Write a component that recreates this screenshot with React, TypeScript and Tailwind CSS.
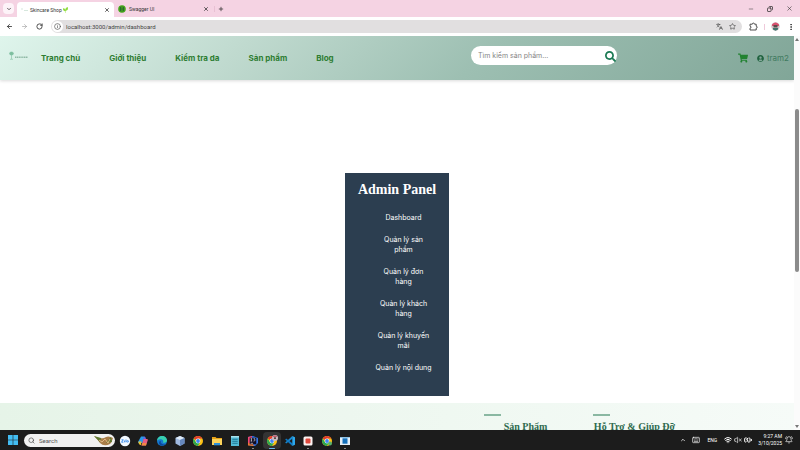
import type { ReactNode } from "react";
import { FaSearch, FaShoppingCart, FaUserCircle } from "react-icons/fa";
import {
  ArrowLeft,
  ArrowRight,
  BatteryCharging,
  BellRing,
  ChevronDown,
  ChevronUp,
  Copy,
  EllipsisVertical,
  Info,
  Keyboard,
  Languages,
  Minus,
  Plus,
  RotateCw,
  Search,
  Star,
  VolumeX,
  Wifi,
  X,
} from "lucide-react";

const navLinks = ["Trang chủ", "Giới thiệu", "Kiểm tra da", "Sản phẩm", "Blog"];

const adminLinks = [
  "Dashboard",
  "Quản lý sản phẩm",
  "Quản lý đơn hàng",
  "Quản lý khách hàng",
  "Quản lý khuyến mãi",
  "Quản lý nội dung",
];

const footerColumns = ["Sản Phẩm", "Hỗ Trợ & Giúp Đỡ"];

function TabStrip() {
  return (
    <div className="flex h-[17px] shrink-0 items-center bg-[#f5d3e3] pl-[3px] text-[#333]">
      <button aria-label="Search tabs" className="flex h-[11px] w-[11px] items-center justify-center rounded bg-[#fdf3f8]">
        <ChevronDown size={6} strokeWidth={3} />
      </button>
      <div className="ml-[3px] flex h-[15px] w-[97px] items-center self-end rounded-t bg-white pr-1 pl-[3px]">
        <svg width="8" height="6" viewBox="0 0 8 6" aria-hidden="true">
          <path d="M1 2h2M4 3.500h4" stroke="#c4dccf" strokeWidth=".7" />
        </svg>
        <span className="ml-[2px] text-[5px] leading-[8px] whitespace-nowrap">Skincare Shop</span>
        <svg className="ml-px" width="5" height="6" viewBox="0 0 5 6" aria-hidden="true">
          <path d="M2.500 6V3M2.500 4C0 4 0 2 0 1.500c2 0 2.500 1 2.500 2.500ZM2.500 3.500C2.500 1 3.500.5 5 .5c0 2-.5 3-2.500 3Z" fill="#8fdc3c" stroke="#8fdc3c" strokeWidth=".4" />
        </svg>
        <button aria-label="Close Skincare Shop" className="ml-auto"><X size={6} strokeWidth={3} /></button>
      </div>
      <div className="flex w-[97px] items-center pr-[2px] pl-1">
        <svg width="8" height="8" viewBox="0 0 8 8" aria-hidden="true">
          <circle cx="4" cy="4" r="3.800" fill="#45a51b" />
          <path d="M3.200 2C2.200 2 2.800 3.700 2 4c.8.300.2 2 1.200 2M4.800 2c1 0 .4 1.700 1.200 2-.8.300-.2 2-1.200 2M3.300 4h1.500" fill="none" stroke="#173647" strokeWidth=".7" />
        </svg>
        <span className="ml-[3px] text-[5px] leading-[8px]">Swagger UI</span>
        <button aria-label="Close Swagger UI" className="ml-auto"><X size={6} strokeWidth={3} /></button>
      </div>
      <button aria-label="New tab" className="ml-[3px] border-l border-[#e8c0d3] pl-[3px]"><Plus size={6} strokeWidth={3} /></button>
      <div className="ml-auto flex items-center gap-[13px] pr-[7px]">
        <button aria-label="Minimize"><Minus size={6} strokeWidth={2} /></button>
        <button aria-label="Restore"><Copy className="-scale-x-100" size={6} strokeWidth={3} /></button>
        <button aria-label="Close window"><X size={7} strokeWidth={2} /></button>
      </div>
    </div>
  );
}

function Toolbar() {
  return (
    <div className="flex h-[19px] shrink-0 items-center bg-white pr-[5px] pl-[6px] text-[#3c3c3c]">
      <div className="flex items-center gap-2">
        <button aria-label="Back"><ArrowLeft size={7} strokeWidth={3} /></button>
        <button aria-label="Forward" className="text-[#999]"><ArrowRight size={7} strokeWidth={2} /></button>
        <button aria-label="Reload"><RotateCw size={7} strokeWidth={3} /></button>
      </div>
      <div className="ml-2 flex h-[13px] flex-1 items-center rounded-full bg-[#e1dfe0] pr-[6px] pl-px">
        <span className="flex h-[11px] w-[11px] items-center justify-center rounded-full bg-white"><Info size={7} strokeWidth={2} /></span>
        <input aria-label="Address" className="ml-[3px] h-[11px] min-w-0 flex-1 bg-transparent text-[6px] text-[#444] outline-none" defaultValue="localhost:3000/admin/dashboard" />
        <button aria-label="Translate"><Languages size={7} strokeWidth={2} /></button>
        <button aria-label="Bookmark" className="ml-[6px]"><Star size={7} strokeWidth={2} /></button>
      </div>
      <button aria-label="Extensions" className="ml-[7px]">
        <svg width="9" height="9" viewBox="0 0 9 9" fill="none" aria-hidden="true">
          <path d="M1 2.200h2.300a1.100 1.100 0 0 1 2.200 0h1.700v2a1 1 0 0 1 0 2V8H1V6.200a1 1 0 0 0 0-2Z" stroke="#3c3c3c" strokeWidth=".9" strokeLinejoin="round" />
        </svg>
      </button>
      <span className="ml-[6px] h-[6px] w-px bg-[#efc9da]" />
      <button aria-label="Profile" className="ml-[6px]">
        <svg width="9" height="9" viewBox="0 0 9 9" aria-hidden="true">
          <circle cx="4.500" cy="4.500" r="4.200" fill="#d0c6cb" />
          <path d="M1 2.500Q4.500-1.500 8 2.500V4H1Z" fill="#d8506f" />
          <path d="M2.500 3h4v2.500h-4Z" fill="#5e4b4b" />
          <path d="M2 6h5v1.500L4.500 8.700 2 7.500Z" fill="#3f756c" />
        </svg>
      </button>
      <button aria-label="Menu" className="ml-[7px]"><EllipsisVertical size={8} strokeWidth={3} /></button>
    </div>
  );
}

function SiteHeader() {
  return (
    <header className="flex h-[44px] shrink-0 items-center bg-linear-[135deg,#dff5ec,#c0dacf_30%,#9dbfb2_60%,#81a698] pr-[5px] pl-[9px] shadow-[0_1px_3px_#00000026]">
      <a href="#home" aria-label="Skincare" className="mb-1">
        <svg width="20" height="10" viewBox="0 0 20 10" aria-hidden="true">
          <path d="M2.500 8V4M.5 2.500C.5.500 4.500.5 4.500 2.500S.5 4.500.5 2.500ZM1 8.300h3" fill="#7dbf9f" stroke="#7dbf9f" strokeWidth=".6" />
          <path d="M6 6.300h13" stroke="#8fb9a5" strokeWidth="1.500" strokeDasharray="1.300 .5" />
        </svg>
      </a>
      <nav className="ml-3 flex gap-[29px] text-[8px] leading-[12px] font-bold whitespace-nowrap text-[#2e7d32]">
        {navLinks.map((label) => (
          <a key={label} href="#page">{label}</a>
        ))}
      </nav>
      <form className="mr-[121px] mb-[6px] ml-auto flex h-[19px] w-[146px] items-center rounded-full bg-white pr-px pl-[7px]">
        <input aria-label="Tìm kiếm sản phẩm" className="h-[15px] min-w-0 flex-1 text-[7px] outline-none placeholder:text-[#858585]" placeholder="Tìm kiếm sản phẩm..." />
        <button type="button" aria-label="Tìm kiếm" className="mt-[2px] text-[#1b7a54]"><FaSearch size={11} /></button>
      </form>
      <a href="#cart" aria-label="Giỏ hàng" className="text-[#238232]"><FaShoppingCart size={10} /></a>
      <a href="#account" className="ml-[9px] flex items-center gap-[3px] text-[8px] leading-[12px] text-[#3f7a60]">
        <FaUserCircle className="text-[#20633f]" size={7} />
        tram2
      </a>
    </header>
  );
}

function AdminPanel() {
  return (
    <aside className="mx-auto mt-[93px] h-[223px] w-[104px] shrink-0 bg-[#2c3e50] pt-[7px] text-center text-white">
      <h2 className="font-['Liberation_Serif',serif] text-[14px] leading-[20px] font-bold whitespace-nowrap">Admin Panel</h2>
      <ul className="mt-[13px] ml-[30px] flex w-[57px] flex-col gap-3 text-[7px] leading-[10px]">
        {adminLinks.map((label) => (
          <li key={label}><a href="#admin" className="block">{label}</a></li>
        ))}
      </ul>
    </aside>
  );
}

function SiteFooter() {
  return (
    <footer className="mt-[7px] flex flex-1 justify-end gap-[26px] bg-linear-to-r from-[#e6f4e8] to-[#f6fbf8] pt-[11px] pr-[118px]">
      {footerColumns.map((title) => (
        <section key={title} className="w-[83px]">
          <div className="h-[2px] w-[17px] bg-[#8ab8a2]" />
          <h3 className="mt-1 text-center font-['Liberation_Serif',serif] text-[10px] leading-[14px] font-bold whitespace-nowrap text-[#2f6b4f]">{title}</h3>
        </section>
      ))}
    </footer>
  );
}

function Scrollbar() {
  return (
    <div className="flex w-[6px] shrink-0 flex-col items-center bg-[#fbfbfb]">
      <span className="mt-[2px] h-0 w-0 border-x-2 border-b-[3px] border-x-transparent border-b-[#777]" />
      <span className="mt-[68px] h-[163px] w-[4px] rounded-full bg-[#8b8b8b]" />
      <span className="mt-auto mb-[2px] h-0 w-0 border-x-2 border-t-[3px] border-x-transparent border-t-[#777]" />
    </div>
  );
}

function Icon({ children }: { children: ReactNode }) {
  return <svg width="12" height="12" viewBox="0 0 12 12" aria-hidden="true">{children}</svg>;
}

function ChromeMark() {
  return (
    <>
      <circle cx="6" cy="6" r="5" fill="#fbc116" />
      <path d="M6 6 1.670 3.500A5 5 0 0 1 10.330 3.500L6 3.600Z" fill="#e33b2e" />
      <path d="M1.670 3.500A5 5 0 0 0 6 11L8 7.200 4 7.200Z" fill="#2da94f" />
      <circle cx="6" cy="6" r="2.400" fill="#fff" />
      <circle cx="6" cy="6" r="1.900" fill="#4285f4" />
    </>
  );
}

const taskbarApps: { name: string; running?: boolean; active?: boolean; icon: ReactNode }[] = [
  {
    name: "Zalo",
    icon: (
      <>
        <circle cx="6" cy="6" r="5.200" fill="#f3f9ff" />
        <path d="M2.500 4.800h1.800L2.500 7.200h1.900M5.600 5.500v1.800M7 4.500v2.800" fill="none" stroke="#1677e8" strokeWidth=".8" />
        <circle cx="8.700" cy="6.400" r=".8" fill="none" stroke="#1677e8" strokeWidth=".7" />
      </>
    ),
  },
  {
    name: "Copilot",
    icon: (
      <>
        <path d="M4 1.500h3.500L5.500 8H1.500Q1 8 1.300 6.500Z" fill="#2a9be8" />
        <path d="M1.500 6.500h3L4 10.300Q2 10 1.500 8Z" fill="#e9c12e" />
        <path d="M7 1.500q1.500 0 2 2L8 5H6Z" fill="#6265e8" />
        <path d="M6.500 4h3.700q1 0 .5 1.500L9 10.500H4.500Z" fill="#e65e84" />
        <path d="M4.500 10.500 5.500 8h4L9 10.500Z" fill="#f28c45" />
      </>
    ),
  },
  {
    name: "Edge",
    icon: (
      <>
        <circle cx="6" cy="6" r="5" fill="#1478cf" />
        <path d="M1 6C1 3 3.500 1 6 1c3 0 5 2 5 4.500C11 7.500 8.500 8 7 7.400 8.300 5.500 6 4 4 4.200 2.500 4.300 1.500 5 1 6Z" fill="#38cfae" />
        <path d="M5 5.800C4 7.500 5.500 10 9.500 9.300 7 12 2.500 10.500 3 7.500 3.200 6.500 4 5.800 5 5.800Z" fill="#0c4b9b" />
      </>
    ),
  },
  {
    name: "VirtualBox",
    icon: (
      <>
        <path d="m6 1 4.500 2v5.500L6 11 1.500 8.500V3Z" fill="#9fb9df" />
        <path d="m6 1 4.500 2L6 5 1.500 3Z" fill="#dfebf8" />
        <path d="M6 5v6l4.500-2.500V3Z" fill="#6688bd" />
      </>
    ),
  },
  { name: "Chrome", icon: <ChromeMark /> },
  {
    name: "Files",
    icon: (
      <>
        <path d="M1 2h3.500l1 1H11v7H1Z" fill="#e8a317" />
        <path d="M1 4h10v6H1Z" fill="#fcd35c" />
        <path d="M3 8h6v2.300H3Z" fill="#2c8fd8" />
      </>
    ),
  },
  {
    name: "Notepad",
    icon: (
      <>
        <path d="M2 1h8v10H2Z" fill="#52bad5" />
        <path d="M2 1h8v1.500H2Z" fill="#a8e3ee" />
        <path d="M3.300 4.300h5.400M3.300 6.300h5.400M3.300 8.300h5.400" stroke="#146887" strokeWidth=".8" />
      </>
    ),
  },
  {
    name: "IntelliJ IDEA",
    running: true,
    icon: (
      <>
        <path d="m1 2 5-1 5 2v5l-3 3-7-1Z" fill="#3476e8" />
        <path d="M1 2 5 1 5 6 1 9Z" fill="#f04876" />
        <path d="m1 8 4-1 2 4-6-.5Z" fill="#ef7934" />
        <path d="M2.700 2.700h6.600v6.600H2.700Z" fill="#100b22" />
        <path d="M3.600 3.700h1.600M4.400 3.700v2.400M3.600 6.100h1.600M6.500 3.700h1.300v1.800q0 .6-1.300.6M3.600 8.300h2.500" fill="none" stroke="#fff" strokeWidth=".6" />
      </>
    ),
  },
  {
    name: "Chrome profile",
    active: true,
    icon: (
      <>
        <ChromeMark />
        <circle cx="9" cy="3" r="3" fill="#c9bcc1" />
        <path d="M6.500 2Q9-1.500 11.500 2Z" fill="#c35c71" />
        <path d="M8 2.300h2v1.700H8Z" fill="#594848" />
      </>
    ),
  },
  {
    name: "Visual Studio Code",
    icon: (
      <>
        <path d="M8.300 1 1.200 7.500l1 .9L8.300 3.700Z" fill="#1689d2" />
        <path d="m8.300 11-7.100-6.500 1-.9 6.100 4.700Z" fill="#0e78c4" />
        <path d="m8.300 1 2.700 1.200v7.600L8.300 11Z" fill="#2ba8ee" />
      </>
    ),
  },
  {
    name: "Recorder",
    running: true,
    icon: (
      <>
        <rect x="1.500" y="1.500" width="9" height="9" rx="1.500" fill="#fbf2f0" />
        <rect x="3.500" y="3.500" width="5" height="5" rx="1" fill="#e0493d" />
      </>
    ),
  },
  { name: "Chrome app", icon: <><ChromeMark /><circle cx="9" cy="8.500" r="2" fill="#58b26a" /></> },
  {
    name: "Window",
    running: true,
    icon: (
      <>
        <path d="M1 2h10v8H1Z" fill="#e7f0f7" />
        <path d="M3.500 3.300h5v5.400h-5Z" fill="#1672bd" />
        <path d="M1 2h10v1H1Z" fill="#8fc2e4" />
      </>
    ),
  },
];

function Taskbar() {
  return (
    <div className="flex h-5 shrink-0 items-center bg-[#1c1c1c] pr-[7px] pl-2 text-white">
      <button aria-label="Start">
        <svg width="10" height="10" viewBox="0 0 10 10" aria-hidden="true">
          <path d="M0 0h4.700v4.700H0ZM5.300 0H10v4.700H5.300ZM0 5.300h4.700V10H0ZM5.300 5.300H10V10H5.300Z" fill="#43bdf3" />
        </svg>
      </button>
      <div className="ml-[6px] flex h-[13px] w-[91px] items-center rounded-full bg-[#f1f1f1] pl-1 text-[#333]">
        <Search size={7} strokeWidth={2} />
        <input aria-label="Search" className="ml-1 h-[11px] w-8 text-[6px] outline-none placeholder:text-[#555]" placeholder="Search" />
        <svg className="mr-px ml-auto" width="21" height="11" viewBox="0 0 21 11" aria-hidden="true">
          <path d="M1 1q5 3 10 2 4-3 9 0-1 4-3 6-6 3-10-1Q5 5 1 1Z" fill="#a97d48" />
          <path d="m1 1 7 2-1 4ZM13 8l5-6 1 5Z" fill="#5e7931" />
          <path d="m6 5 3 2 3-3 3 4 2-4" fill="none" stroke="#e2b784" />
        </svg>
      </div>
      <div className="ml-px flex w-[238px] justify-between">
        {taskbarApps.map((app) => (
          <button
            key={app.name}
            aria-label={app.name}
            className={`flex h-[17px] w-[18px] flex-col items-center justify-end rounded-sm ${app.active ? "bg-[#343434]" : ""}`}
          >
            <Icon>{app.icon}</Icon>
            <span className={`mt-px h-px rounded-full ${app.active ? "w-[6px] bg-[#6db9ee]" : app.running ? "w-[2px] bg-[#999]" : "w-0"}`} />
          </button>
        ))}
      </div>
      <div className="ml-auto flex items-center text-[5px] leading-[7px]">
        <ChevronUp size={6} strokeWidth={3} />
        <Keyboard className="ml-[6px]" size={8} strokeWidth={2} />
        <span className="ml-[7px]">ENG</span>
        <Wifi className="ml-[7px]" size={8} strokeWidth={3} />
        <VolumeX className="ml-[2px]" size={8} strokeWidth={2} />
        <BatteryCharging className="ml-[2px]" size={8} strokeWidth={3} />
        <div className="ml-[6px] text-right">
          <div>9:27 AM</div>
          <div>3/10/2025</div>
        </div>
        <BellRing className="ml-[3px]" size={8} strokeWidth={2} />
      </div>
    </div>
  );
}

export default function App() {
  return (
    <div className="flex h-screen flex-col overflow-hidden bg-white font-[Roboto,'Noto_Sans',sans-serif]">
      <TabStrip />
      <Toolbar />
      <div className="flex min-h-0 flex-1 font-[Inter,'Noto_Sans',sans-serif]">
        <main className="flex min-w-0 flex-1 flex-col overflow-hidden">
          <SiteHeader />
          <AdminPanel />
          <SiteFooter />
        </main>
        <Scrollbar />
      </div>
      <Taskbar />
    </div>
  );
}
